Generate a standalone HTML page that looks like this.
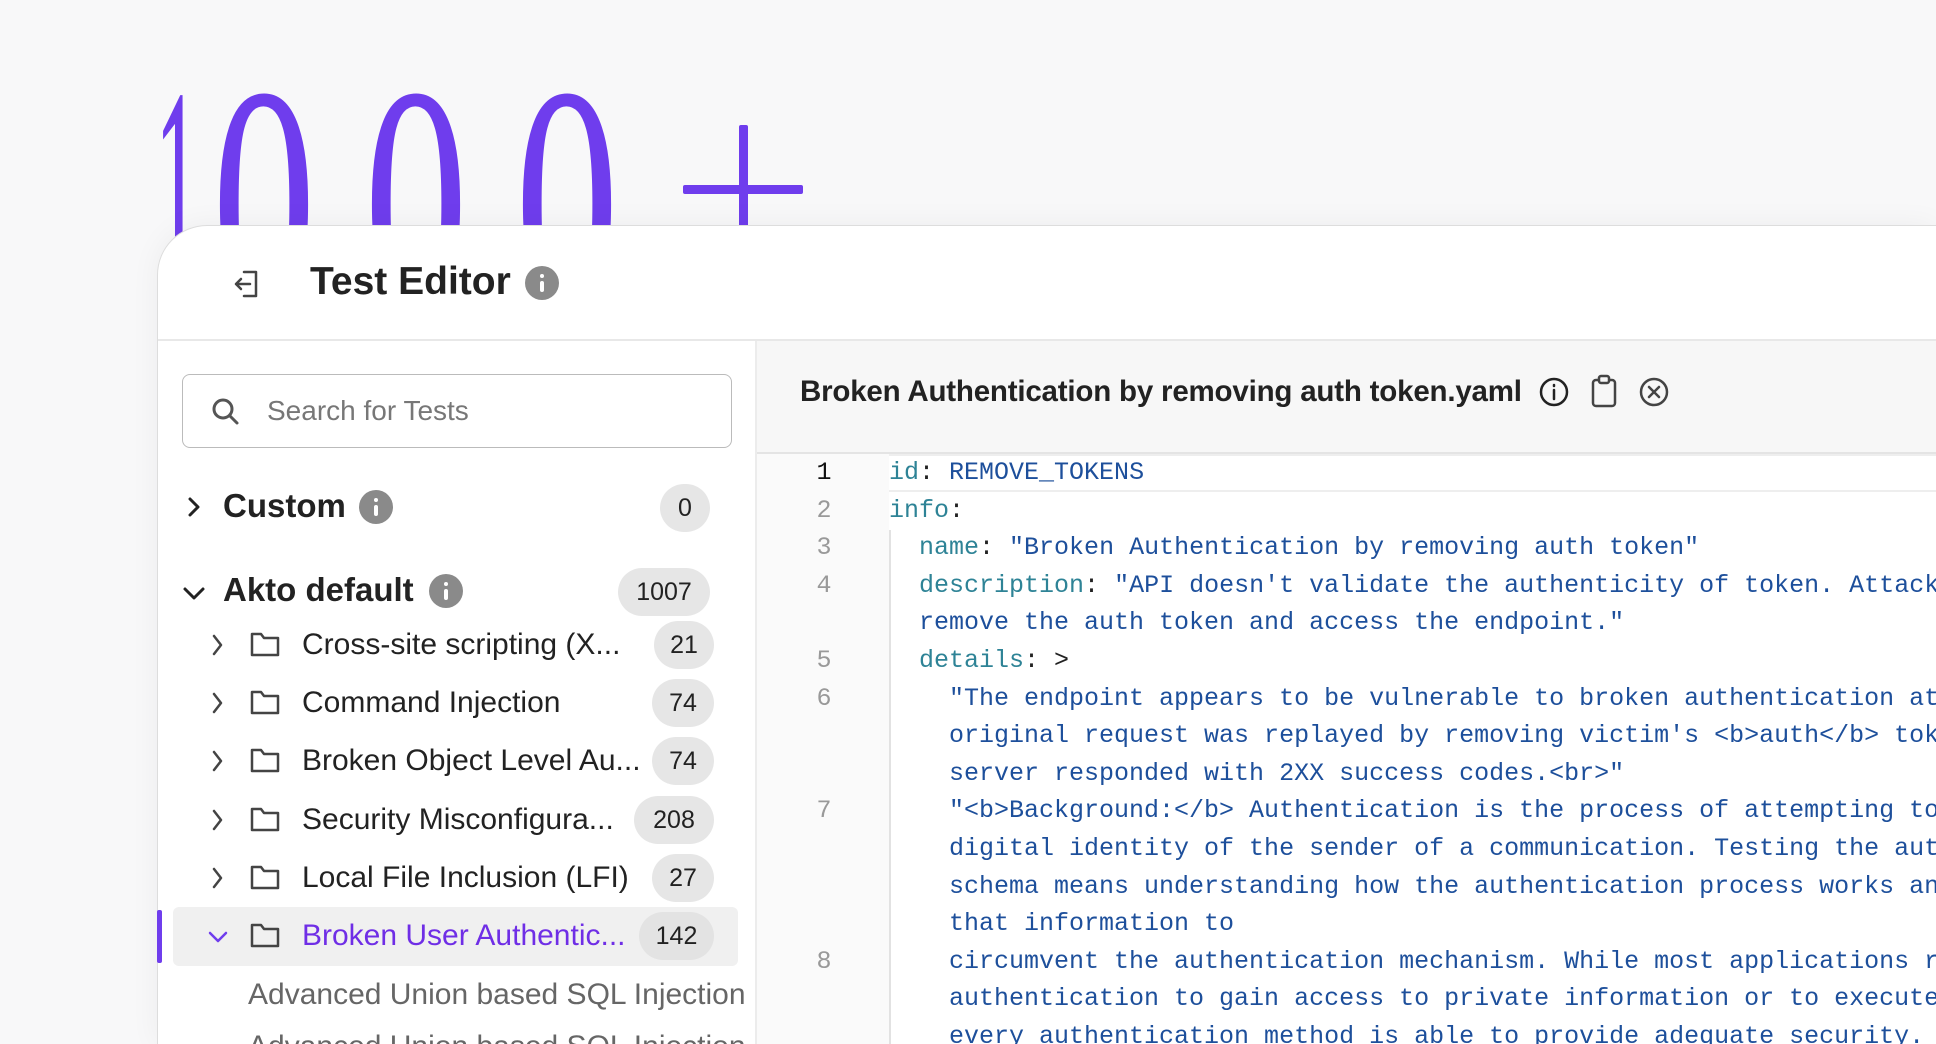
<!DOCTYPE html>
<html><head><meta charset="utf-8"><style>
*{box-sizing:border-box;margin:0;padding:0}
html,body{width:1936px;height:1044px;overflow:hidden}
body{background:#f8f8f9;font-family:"Liberation Sans",sans-serif;position:relative}
.big{position:absolute;left:0;top:0}
.card{position:absolute;left:157px;top:225px;width:1779px;height:819px;background:#fff;border:1px solid #ddd;border-right:none;border-bottom:none;border-radius:50px 0 0 0;box-shadow:0 0 30px rgba(0,0,0,.05);overflow:hidden}
.hdr{position:absolute;left:0;top:0;width:100%;height:115px;border-bottom:2px solid #e8e8e8}
.title{position:absolute;left:152px;top:34px;font-size:39px;font-weight:bold;color:#222}
.left{position:absolute;left:0;top:115px;width:599px;height:704px;border-right:2px solid #ececec;background:#fff}
.search{position:absolute;left:24px;top:33px;width:550px;height:74px;border:1.5px solid #bbb;border-radius:8px}
.search span{position:absolute;left:84px;top:20px;font-size:28px;color:#777}
.grp{position:absolute;left:0;font-size:33px;font-weight:bold;color:#222}
.badge{position:absolute;height:48px;border-radius:24px;background:#e6e6e6;font-size:25px;color:#222;text-align:center;line-height:48px}
.info{position:absolute;width:34px;height:34px;border-radius:50%;background:#8a8a8a}
.info:before{content:"";position:absolute;left:15px;top:15px;width:4px;height:11px;background:#fff;border-radius:2px}
.info:after{content:"";position:absolute;left:15px;top:8px;width:4px;height:4px;background:#fff;border-radius:2px}
.right{position:absolute;left:599px;top:115px;width:1200px;height:704px;background:#f7f7f7;overflow:hidden}
.ftitle{position:absolute;left:43px;top:34px;font-size:29.5px;font-weight:bold;color:#222;letter-spacing:-.2px;white-space:nowrap}
.editor{position:absolute;left:0;top:111px;width:1200px;height:600px;background:#fff;border-top:2px solid #e4e4e4;overflow:hidden}
.gut{position:absolute;left:0;top:0;width:132px;height:100%;background:#fafafa}
.code{position:absolute;left:0;top:0;font-family:"Liberation Mono",monospace;font-size:25px}
.ln{position:absolute;left:0;height:37.6px;line-height:37.6px;white-space:pre;width:1200px}
.ln .n{position:absolute;left:42px;width:50px;text-align:center;color:#999}
.ln .c{position:absolute;left:132px;color:#1d4f9b}
.k{color:#2e8396}.p{color:#222}
.tx{position:absolute;left:302px;white-space:nowrap;font-size:30px;color:#222}
</style></head><body>
<svg class="big" width="1936" height="300">
<g fill="#6f3ded" font-family="Liberation Serif, serif" font-size="330">
<text x="155" y="313" textLength="45" lengthAdjust="spacingAndGlyphs">1</text>
<text x="212" y="313" textLength="104" lengthAdjust="spacingAndGlyphs">0</text>
<text x="364" y="313" textLength="104" lengthAdjust="spacingAndGlyphs">0</text>
<text x="515" y="313" textLength="104" lengthAdjust="spacingAndGlyphs">0</text>
</g>
<rect x="683" y="185" width="120" height="9" rx="2" fill="#6f3ded"/>
<rect x="739" y="125" width="9" height="120" rx="2" fill="#6f3ded"/>
</svg>
<div class="card">
 <div class="hdr">
  <svg style="position:absolute;left:74px;top:42px" width="30" height="32" viewBox="0 0 30 32" fill="none" stroke="#444" stroke-width="2.5" stroke-linecap="round" stroke-linejoin="round"><path d="M12 4h12v24H12"/><path d="M18 16H4M9 11l-5 5 5 5"/></svg>
  <div class="title">Test Editor</div>
  <div class="info" style="left:367px;top:40px"></div>
 </div>
 <div class="left">
  <div class="search">
   <svg style="position:absolute;left:28px;top:22px" width="30" height="30" viewBox="0 0 30 30" fill="none" stroke="#555" stroke-width="3" stroke-linecap="round"><circle cx="12" cy="12" r="9"/><path d="M19 19l7 7"/></svg>
   <span>Search for Tests</span>
  </div>
  <svg style="position:absolute;left:28px;top:155px" width="16" height="22" viewBox="0 0 16 22" fill="none" stroke="#222" stroke-width="3" stroke-linecap="round" stroke-linejoin="round"><path d="M4 3l8 8-8 8"/></svg>
  <div class="grp" style="left:65px;top:146px">Custom</div>
  <div class="info" style="left:201px;top:149px"></div>
  <div class="badge" style="left:502px;top:143px;width:50px">0</div>
  <svg style="position:absolute;left:24px;top:244px" width="24" height="16" viewBox="0 0 24 16" fill="none" stroke="#222" stroke-width="3" stroke-linecap="round" stroke-linejoin="round"><path d="M3 4l9 9 9-9"/></svg>
  <div class="grp" style="left:65px;top:230px">Akto default</div>
  <div class="info" style="left:271px;top:233px"></div>
  <div class="badge" style="left:460px;top:227px;width:92px">1007</div>
 </div>
 <div class="right">
  <div class="ftitle">Broken Authentication by removing auth token.yaml</div>
  <svg style="position:absolute;left:781px;top:35px" width="32" height="32" viewBox="0 0 32 32" fill="none" stroke="#222" stroke-width="2.5"><circle cx="16" cy="16" r="13"/><path d="M16 14v9M16 9v1" stroke-linecap="round"/></svg>
  <svg style="position:absolute;left:833px;top:33px" width="28" height="34" viewBox="0 0 28 34" fill="none" stroke="#444" stroke-width="2.5" stroke-linejoin="round"><rect x="3" y="6" width="22" height="26" rx="3"/><rect x="9" y="2" width="10" height="7" rx="2" fill="#f7f7f7"/></svg>
  <svg style="position:absolute;left:881px;top:35px" width="32" height="32" viewBox="0 0 32 32" fill="none" stroke="#444" stroke-width="2.5" stroke-linecap="round"><circle cx="16" cy="16" r="13"/><path d="M11 11l10 10M21 11l-10 10"/></svg>
  <div class="editor">
   <div class="gut"></div>
   <div style="position:absolute;left:132px;top:0;width:1200px;height:38px;border:2px solid #eee;border-left:none"></div>
   <div style="position:absolute;left:132px;top:76px;width:2px;height:700px;background:#e2e2e2"></div>
   <div class="code">
    <div class="ln" style="top:0"><span class="n" style="color:#111">1</span><span class="c"><span class="k">id</span><span class="p">:</span> REMOVE_TOKENS</span></div>
    <div class="ln" style="top:37.6px"><span class="n">2</span><span class="c"><span class="k">info</span><span class="p">:</span></span></div>
    <div class="ln" style="top:75.2px"><span class="n">3</span><span class="c">  <span class="k">name</span><span class="p">:</span> "Broken Authentication by removing auth token"</span></div>
    <div class="ln" style="top:112.8px"><span class="n">4</span><span class="c">  <span class="k">description</span><span class="p">:</span> "API doesn't validate the authenticity of token. Attacker can</span></div>
    <div class="ln" style="top:150.4px"><span class="n"></span><span class="c">  remove the auth token and access the endpoint."</span></div>
    <div class="ln" style="top:188px"><span class="n">5</span><span class="c">  <span class="k">details</span><span class="p">: &gt;</span></span></div>
    <div class="ln" style="top:225.6px"><span class="n">6</span><span class="c">    "The endpoint appears to be vulnerable to broken authentication attack.</span></div>
    <div class="ln" style="top:263.2px"><span class="n"></span><span class="c">    original request was replayed by removing victim's &lt;b&gt;auth&lt;/b&gt; token.</span></div>
    <div class="ln" style="top:300.8px"><span class="n"></span><span class="c">    server responded with 2XX success codes.&lt;br&gt;"</span></div>
    <div class="ln" style="top:338.4px"><span class="n">7</span><span class="c">    "&lt;b&gt;Background:&lt;/b&gt; Authentication is the process of attempting to verify</span></div>
    <div class="ln" style="top:376px"><span class="n"></span><span class="c">    digital identity of the sender of a communication. Testing the authentication</span></div>
    <div class="ln" style="top:413.6px"><span class="n"></span><span class="c">    schema means understanding how the authentication process works and using</span></div>
    <div class="ln" style="top:451.2px"><span class="n"></span><span class="c">    that information to</span></div>
    <div class="ln" style="top:488.8px"><span class="n">8</span><span class="c">    circumvent the authentication mechanism. While most applications require</span></div>
    <div class="ln" style="top:526.4px"><span class="n"></span><span class="c">    authentication to gain access to private information or to execute tasks, not</span></div>
    <div class="ln" style="top:564px"><span class="n"></span><span class="c">    every authentication method is able to provide adequate security.</span></div>
   </div>
  </div>
 </div>
</div>
<div style="position:absolute;left:173px;top:907px;width:565px;height:59px;background:#f0f0f0;border-radius:6px"></div>
<div style="position:absolute;left:157px;top:910px;width:5px;height:53px;background:#6f3ded;border-radius:2px"></div>
<div style="position:absolute;left:0;top:0;width:760px;height:1044px;overflow:hidden">
 <div class="tx" style="top:628px">Cross-site scripting (X...</div>
 <div class="tx" style="top:686px">Command Injection</div>
 <div class="tx" style="top:744px">Broken Object Level Au...</div>
 <div class="tx" style="top:803px">Security Misconfigura...</div>
 <div class="tx" style="top:861px">Local File Inclusion (LFI)</div>
 <div class="tx" style="top:919px;color:#6f2ee6">Broken User Authentic...</div>
 <div class="tx" style="left:248px;top:978px;color:#666">Advanced Union based SQL Injection</div>
 <div class="tx" style="left:248px;top:1030px;color:#666">Advanced Union based SQL Injection</div>
 <div class="badge" style="left:654px;top:621px;width:60px">21</div>
 <div class="badge" style="left:652px;top:679px;width:62px">74</div>
 <div class="badge" style="left:652px;top:737px;width:62px">74</div>
 <div class="badge" style="left:634px;top:796px;width:80px">208</div>
 <div class="badge" style="left:652px;top:854px;width:62px">27</div>
 <div class="badge" style="left:639px;top:912px;width:75px;background:#e3e3e3">142</div>
</div>
<svg style="position:absolute;left:0;top:0" width="300" height="1044" fill="none" stroke="#444" stroke-width="2.5" stroke-linecap="round" stroke-linejoin="round">
 <path d="M214 636l7 9-7 9M214 694l7 9-7 9M214 752l7 9-7 9M214 811l7 9-7 9M214 869l7 9-7 9"/>
 <path d="M210 933l8 8 8-8" stroke="#6f3ded"/>
 <path d="M252 634h9l3 4h14v17h-26zM252 692h9l3 4h14v17h-26zM252 750h9l3 4h14v17h-26zM252 809h9l3 4h14v17h-26zM252 867h9l3 4h14v17h-26zM252 925h9l3 4h14v17h-26z"/>
</svg>
</body></html>
